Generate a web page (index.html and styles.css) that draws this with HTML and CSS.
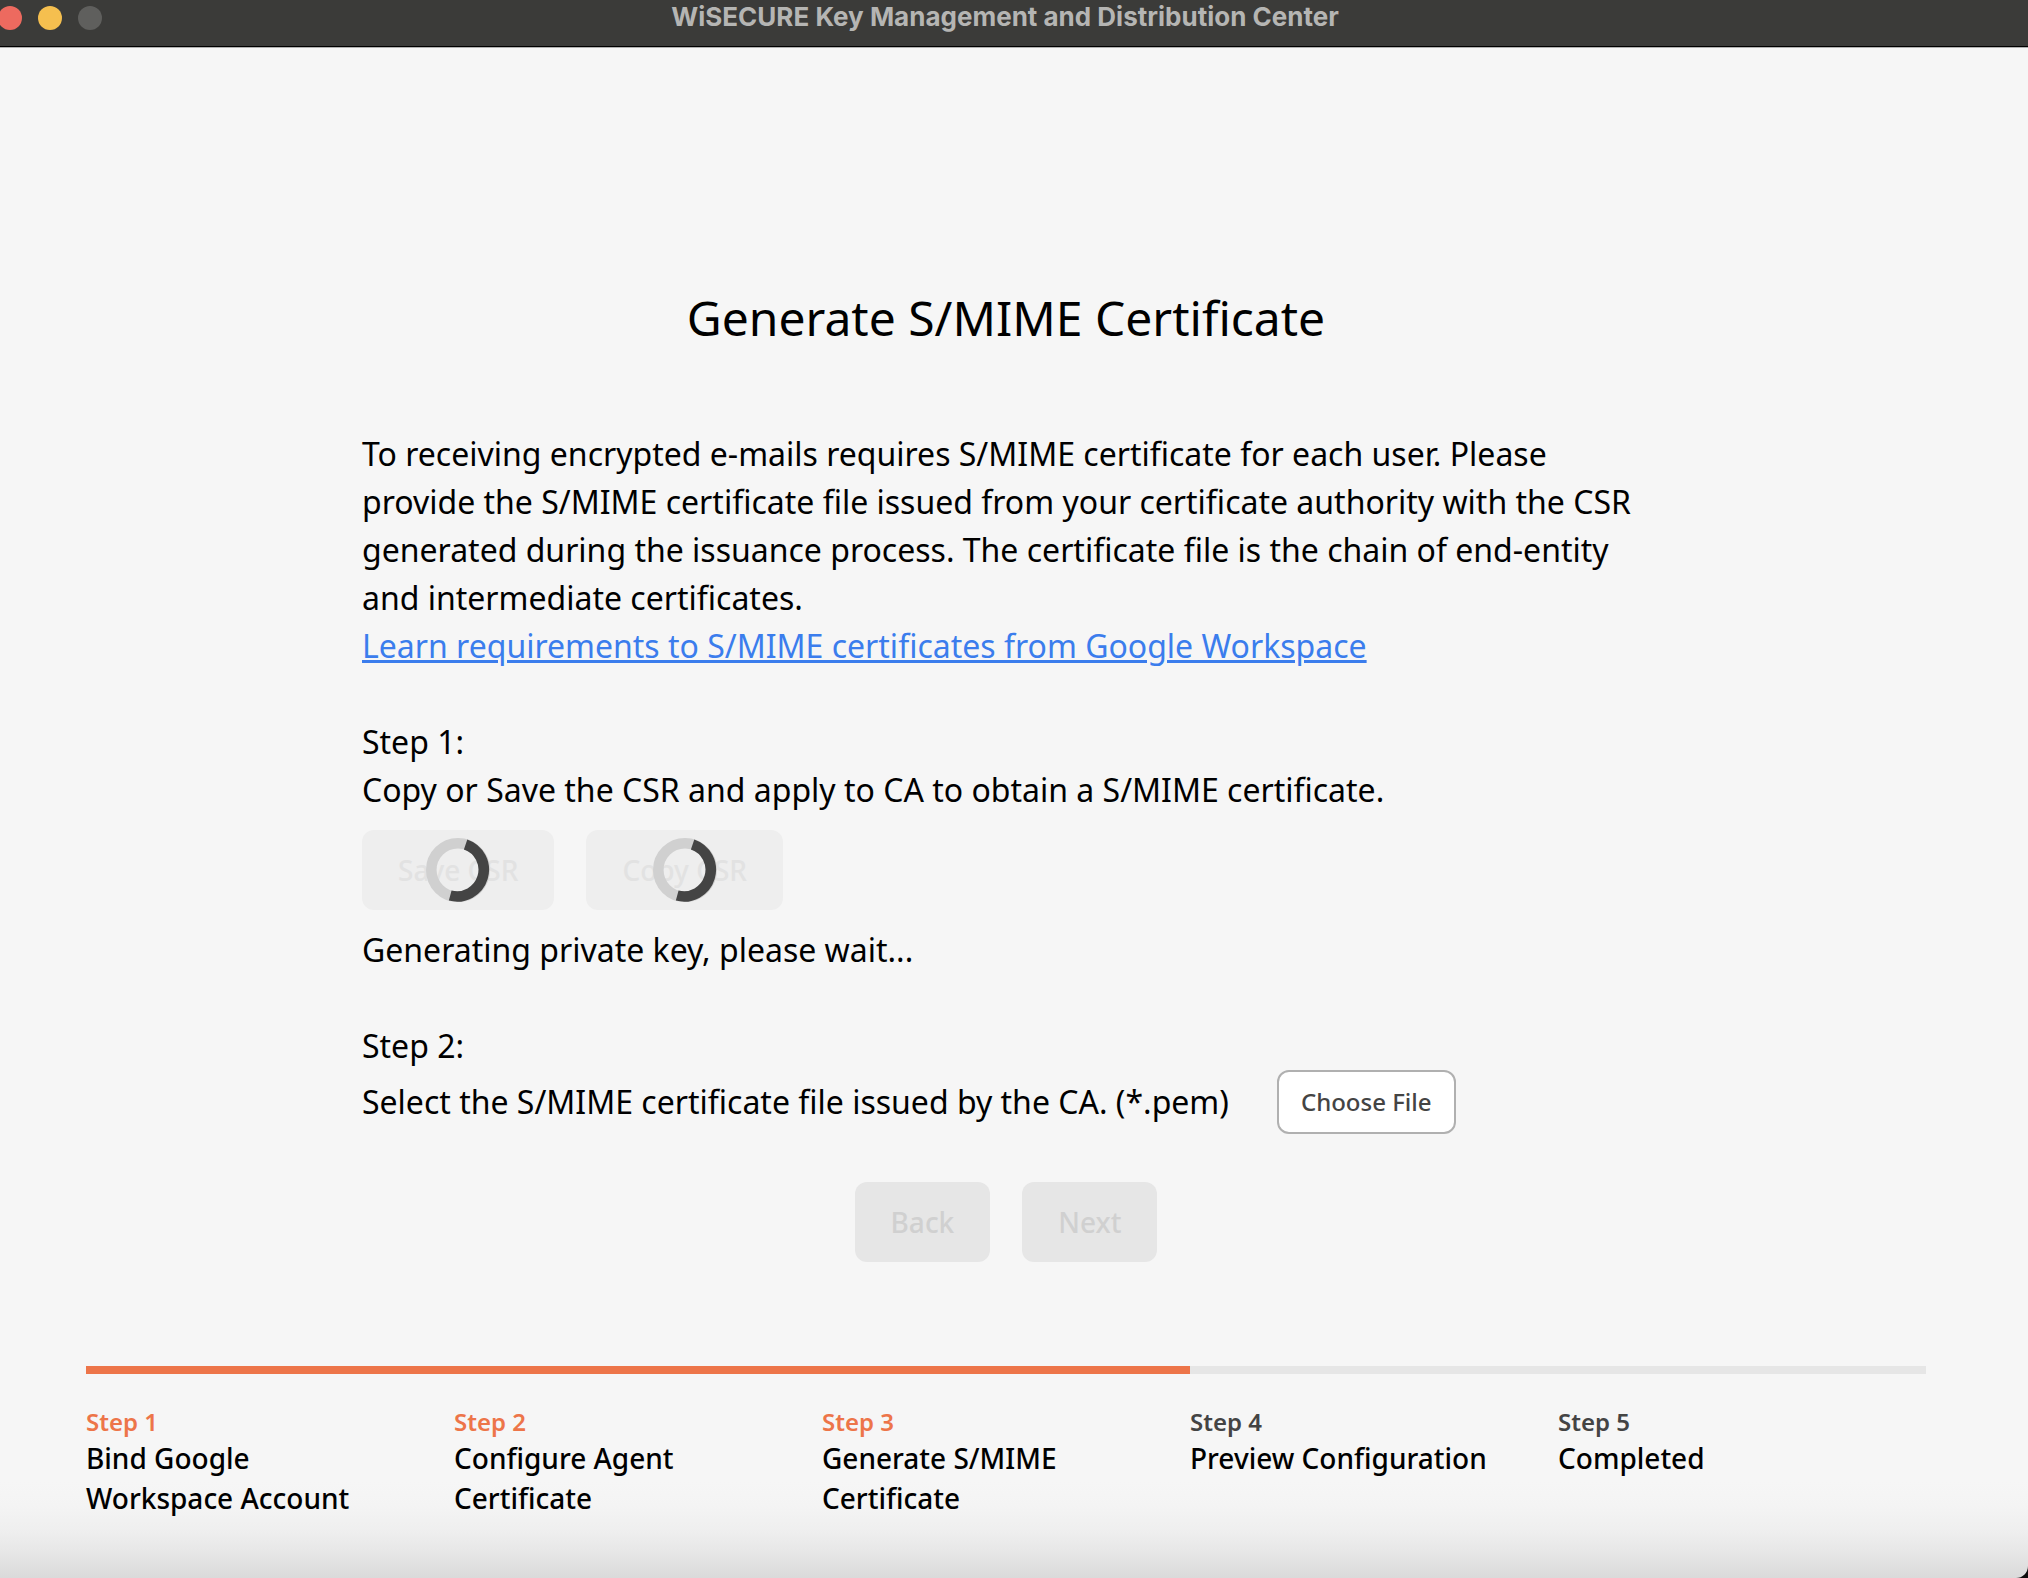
FILE: index.html
```html
<!DOCTYPE html>
<html lang="en">
<head>
<meta charset="utf-8">
<title>WiSECURE Key Management and Distribution Center</title>
<link rel="stylesheet" href="styles.css">
</head>
<body>
<div class="window">
  <header class="titlebar">
    <div class="lights">
      <span class="light light-close"></span>
      <span class="light light-minimize"></span>
      <span class="light light-zoom"></span>
    </div>
    <div class="titlebar-text">WiSECURE Key Management and Distribution Center</div>
  </header>

  <main class="page">
    <h1 class="heading">Generate S/MIME Certificate</h1>

    <div class="content">
      <section class="block">
        <p>To receiving encrypted e-mails requires S/MIME certificate for each user. Please provide the S/MIME certificate file issued from your certificate authority with the CSR generated during the issuance process. The certificate file is the chain of end-entity and intermediate certificates.</p>
        <a class="link" href="#requirements">Learn requirements to S/MIME certificates from Google Workspace</a>
      </section>

      <section class="block">
        <p>Step 1:</p>
        <p>Copy or Save the CSR and apply to CA to obtain a S/MIME certificate.</p>
        <div class="actions csr-actions">
          <button class="button button-loading" type="button" disabled>
            <span>Save CSR</span>
            <svg class="spinner" viewBox="0 0 64 64" aria-hidden="true">
              <circle class="spinner-track" cx="32" cy="32" r="26.7"/>
              <path class="spinner-arc" d="M39.6 6.4A26.7 26.7 0 0 1 24.2 57.5"/>
            </svg>
          </button>
          <button class="button button-loading" type="button" disabled>
            <span>Copy CSR</span>
            <svg class="spinner" viewBox="0 0 64 64" aria-hidden="true">
              <circle class="spinner-track" cx="32" cy="32" r="26.7"/>
              <path class="spinner-arc" d="M39.6 6.4A26.7 26.7 0 0 1 24.2 57.5"/>
            </svg>
          </button>
        </div>
        <p role="status">Generating private key, please wait...</p>
      </section>

      <section class="block">
        <p>Step 2:</p>
        <div class="file-row">
          <p id="file-text">Select the S/MIME certificate file issued by the CA. (*.pem)</p>
          <button class="file-button" type="button" aria-describedby="file-text">Choose File</button>
        </div>
      </section>

      <div class="actions nav-actions">
        <button class="button" type="button" disabled>Back</button>
        <button class="button" type="button" disabled>Next</button>
      </div>
    </div>

    <footer class="stepper">
      <div class="progress"><div class="progress-fill" style="width: 60%"></div></div>
      <ol class="steps">
        <li class="step step-done"><span class="step-label">Step 1</span><span>Bind Google Workspace Account</span></li>
        <li class="step step-done"><span class="step-label">Step 2</span><span>Configure Agent Certificate</span></li>
        <li class="step step-done"><span class="step-label">Step 3</span><span>Generate S/MIME Certificate</span></li>
        <li class="step"><span class="step-label">Step 4</span><span>Preview Configuration</span></li>
        <li class="step"><span class="step-label">Step 5</span><span>Completed</span></li>
      </ol>
    </footer>
  </main>
</div>
</body>
</html>
```

FILE: styles.css
```css
* {
  box-sizing: border-box;
}

body {
  margin: 0;
  background: #0c0c0c;
  font-family: "Noto Sans", sans-serif;
  font-size: 32px;
  line-height: 48px;
  color: #000;
}

p,
h1,
ol {
  margin: 0;
  padding: 0;
}

button {
  font-family: inherit;
}

.window {
  display: flex;
  flex-direction: column;
  min-height: 100vh;
  overflow: hidden;
  background: linear-gradient(to top, #dadada 0, #e6e6e6 24px, #efefef 48px, #f4f4f4 72px, #f6f6f6 96px);
  border-bottom-right-radius: 12px;
}

/* Title bar */
.titlebar {
  display: grid;
  grid-template-columns: 120px 1fr 120px;
  height: 48px;
  padding-right: 18px;
  background: #3b3b39;
  border-bottom: 1px solid #b0b0b0;
  box-shadow: inset 0 -1px #000;
}

.lights {
  display: flex;
  gap: 16px;
  padding-top: 6px;
  margin-left: -2px;
}

.light {
  width: 24px;
  height: 24px;
  border-radius: 50%;
}

.light-close {
  background: #ed6a5f;
}

.light-minimize {
  background: #f5bf4f;
}

.light-zoom {
  background: #5f5f5d;
}

.titlebar-text {
  font-family: Inter, sans-serif;
  font-size: 26px;
  font-weight: 700;
  font-optical-sizing: none;
  line-height: 34px;
  text-align: center;
  color: #b5b5b3;
}

/* Page */
.page {
  flex: 1;
  display: flex;
  flex-direction: column;
  padding: 234px 102px 56px 86px;
}

.heading {
  font-size: 48px;
  font-weight: 400;
  line-height: 72px;
  text-align: center;
}

.content {
  display: flex;
  flex-direction: column;
  gap: 48px;
  width: 100%;
  max-width: 1288px;
  margin: 76px auto 0;
}

.link {
  color: #3b7ded;
  text-decoration-thickness: 3px;
}

.actions {
  display: flex;
  gap: 32px;
}

.csr-actions {
  padding: 16px 0;
}

.nav-actions {
  justify-content: center;
}

.button {
  position: relative;
  height: 80px;
  padding: 0 36px;
  border: 0;
  border-radius: 12px;
  background: #e6e6e6;
  color: #d0d0d0;
  font-size: 28px;
  font-weight: 500;
}

.button-loading {
  background: #eee;
  color: #e2e2e2;
}

.spinner {
  position: absolute;
  inset: 0;
  width: 64px;
  height: 64px;
  margin: auto;
  fill: none;
  stroke-width: 10.6;
}

.spinner-track {
  stroke: #d0d0d0;
}

.spinner-arc {
  stroke: #444;
}

.file-row {
  display: flex;
  align-items: center;
  gap: 48px;
}

.file-button {
  height: 64px;
  padding: 0 22px 2px;
  border: 2px solid #b0b0b0;
  border-radius: 12px;
  background: #fff;
  color: #444;
  font-size: 24px;
  font-weight: 500;
}

/* Stepper */
.stepper {
  margin-top: 104px;
}

.progress {
  height: 8px;
  background: #e6e6e6;
}

.progress-fill {
  height: 100%;
  background: #ed7549;
}

.steps {
  display: grid;
  grid-template-columns: repeat(5, 1fr);
  margin-top: 32px;
  list-style: none;
}

.step {
  display: flex;
  flex-direction: column;
  padding-right: 64px;
  font-size: 28px;
  font-weight: 500;
  line-height: 40px;
}

.step-label {
  font-size: 24px;
  font-weight: 600;
  line-height: 32px;
  color: #444;
}

.step-done .step-label {
  color: #ed7549;
}
```
